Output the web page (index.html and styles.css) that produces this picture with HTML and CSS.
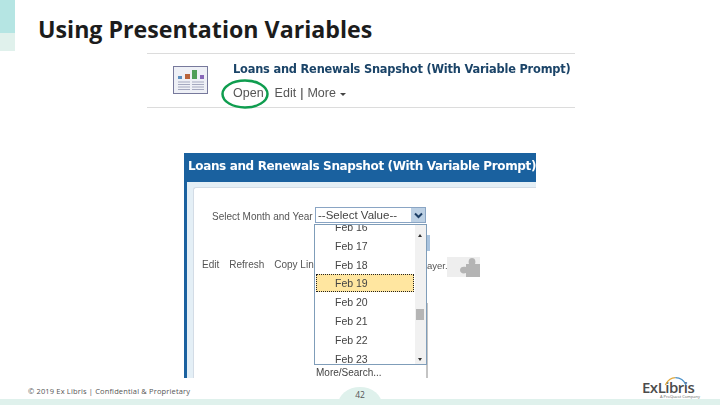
FILE: index.html
```html
<!DOCTYPE html>
<html>
<head>
    <meta charset="utf-8">
    <title>Using Presentation Variables</title>
    <link rel="stylesheet" href="styles.css">
</head>
<body>
    <div class="slide">
        <div class="accent"><div class="accent-top"></div><div class="accent-bottom"></div></div>
        <h1 class="title">Using Presentation Variables</h1>

        <!-- first screenshot: catalog entry -->
        <div class="shot catalog">
            <svg class="report-icon" width="36" height="29" viewBox="0 0 36 29">
                <rect x="0.5" y="0.5" width="34" height="27" fill="#eef0f6" stroke="#77799c"/>
                <rect x="5" y="10" width="4" height="3" fill="#5b8fc0"/>
                <rect x="12" y="8" width="5" height="5" fill="#b9643c"/>
                <rect x="19" y="4" width="5" height="9" fill="#4f9e58"/>
                <rect x="27" y="9" width="4" height="4" fill="#8867b8"/>
                <path d="M5 16h12M19 16h12M5 18.500h12M19 18.500h12M5 21h12M19 21h12M5 23.500h12M19 23.500h12" stroke="#a5a9c0"/>
            </svg>
            <div class="catalog-text">
                <div class="catalog-name">Loans and Renewals Snapshot (With Variable Prompt)</div>
                <div class="catalog-links">
                    <span>Open</span><span class="link-gap">Edit</span><b>|</b><span>More</span><i class="caret"></i>
                </div>
            </div>
            <svg class="ring" width="50" height="32" viewBox="0 0 50 32">
                <ellipse cx="25" cy="16" rx="22.500" ry="13.500" fill="none" stroke="#0f9d4f" stroke-width="2.500"/>
            </svg>
        </div>

        <!-- second screenshot: prompt with open dropdown -->
        <div class="shot prompt">
            <div class="prompt-head">Loans and Renewals Snapshot (With Variable Prompt)</div>
            <div class="prompt-body">
                <div class="prompt-inner">
                    <div class="prompt-row">
                        <span class="prompt-label">Select Month and Year</span>
                        <div class="select">
                            <span>--Select Value--</span>
                            <span class="select-btn">
                                <svg width="9" height="7" viewBox="0 0 9 7"><path d="M1 1.500l3.500 3.500 3.500-3.500" fill="none" stroke="#1d3f66" stroke-width="2"/></svg>
                            </span>
                        </div>
                    </div>
                    <div class="prompt-links">
                        <span>Edit</span><span>Refresh</span><span>Copy Link</span>
                    </div>
                </div>
            </div>

            <div class="side-btn"></div>
            <div class="side-line"></div>
            <span class="layer-text">ayer.</span>
            <div class="puzzle">
                <svg width="20" height="19" viewBox="0 0 20 19"><path d="M6 6h3c-1-3 0-6 3-6s4 3 3 6h5v13H6v-4c-3 1-6 0-6-3s3-4 6-3z" fill="#b4b4b4"/></svg>
            </div>

            <div class="dropdown">
                <div class="options">
                    <div class="option">Feb 16</div>
                    <div class="option">Feb 17</div>
                    <div class="option">Feb 18</div>
                    <div class="option selected">Feb 19</div>
                    <div class="option">Feb 20</div>
                    <div class="option">Feb 21</div>
                    <div class="option">Feb 22</div>
                    <div class="option">Feb 23</div>
                </div>
                <div class="scrollbar">
                    <i class="arrow-up"></i>
                    <div class="thumb"></div>
                    <i class="arrow-down"></i>
                </div>
            </div>
            <div class="more-search">More/Search...</div>
        </div>

        <div class="footer">
            <span class="copyright">© 2019 Ex Libris | Confidential &amp; Proprietary</span>
            <span class="page-tab">42</span>
            <div class="logo">
                <svg class="logo-arc" width="24" height="10" viewBox="0 0 36 14">
                    <path d="M2 13C6 5 11 2 17 2" fill="none" stroke="#e0a83c" stroke-width="2"/>
                    <path d="M17 2C24 2 30 6 33 13" fill="none" stroke="#4a90c8" stroke-width="2"/>
                </svg>
                <div class="logo-word">ExLibris</div>
                <div class="logo-sub">A ProQuest Company</div>
            </div>
        </div>
    </div>
</body>
</html>
```

FILE: styles.css
```css
html, body {
    margin: 0;
    padding: 0;
}
body {
    width: 720px;
    height: 405px;
    overflow: hidden;
    background: white;
}
.slide {
    position: relative;
    width: 720px;
    height: 405px;
    overflow: hidden;
    background: white;
}
.accent {
    position: absolute;
    left: 0;
    top: 0;
    width: 15px;
}
.accent-top {
    height: 33px;
    background: #b5e5e3;
}
.accent-bottom {
    height: 18px;
    background: #e0f1ec;
}
.title {
    position: absolute;
    left: 38px;
    top: 12px;
    margin: 0;
    font-family: "Open Sans", sans-serif;
    font-size: 23.200px;
    line-height: 34px;
    font-weight: 700;
    letter-spacing: 0;
    color: #1c1c1c;
    white-space: nowrap;
}

/* pasted screenshots */
.shot {
    position: absolute;
    font-family: "DejaVu Sans", sans-serif;
    filter: blur(0.4px);
}
.catalog {
    left: 147px;
    top: 53px;
    width: 428px;
    height: 55px;
    box-sizing: border-box;
    border-top: 1px solid #dcdcdc;
    border-bottom: 1px solid #dcdcdc;
    display: flex;
    gap: 24px;
    padding: 8px 0 0 26px;
}
.report-icon {
    margin-top: 4px;
}
.catalog-name {
    font-size: 11.400px;
    font-weight: bold;
    line-height: 14px;
    color: #1b4468;
    white-space: nowrap;
    letter-spacing: -0.2px;
}
.catalog-links {
    display: flex;
    align-items: center;
    margin-top: 10px;
    font-family: "Liberation Sans", sans-serif;
    font-size: 12.500px;
    line-height: 14px;
    color: #555;
}
.catalog-links .link-gap {
    margin-left: 11px;
}
.catalog-links b {
    margin: 0 4px;
    font-weight: normal;
    color: #333;
}
.caret {
    margin: 2px 0 0 4px;
    border-left: 3.500px solid transparent;
    border-right: 3.500px solid transparent;
    border-top: 3.500px solid #444;
}
.ring {
    position: absolute;
    left: 73px;
    top: 24px;
}
.prompt {
    left: 184px;
    top: 153px;
    width: 352px;
    height: 225px;
}
.prompt-head {
    height: 29px;
    padding-left: 4px;
    background: #1a619f;
    color: white;
    font-size: 12px;
    font-weight: bold;
    line-height: 26px;
    white-space: nowrap;
    letter-spacing: -0.36px;
}
.prompt-body {
    height: 196px;
    box-sizing: border-box;
    border-left: 3px solid #1a619f;
    background: #e4eff6;
    padding: 5px 0 0 6px;
}
.prompt-inner {
    height: 191px;
    box-sizing: border-box;
    background: white;
    border-top: 1px solid #d3dce6;
    border-left: 1px solid #d3dce6;
    border-top-left-radius: 3px;
    padding: 19px 0 0 18px;
    font-family: "Liberation Sans", sans-serif;
    font-size: 10px;
    color: #555;
}
.prompt-row {
    display: flex;
    align-items: center;
}
.prompt-label {
    width: 103px;
    white-space: nowrap;
    margin-top: 2px;
}
.select {
    width: 111px;
    height: 16px;
    box-sizing: border-box;
    border: 1px solid #8aa5c4;
    display: flex;
    align-items: center;
    justify-content: space-between;
    padding-left: 2px;
    font-size: 11.500px;
    color: #444;
    white-space: nowrap;
}
.select-btn {
    width: 14px;
    height: 14px;
    background: #bcd0e4;
    display: flex;
    align-items: center;
    justify-content: center;
}
.prompt-links {
    display: flex;
    margin-top: 36px;
    margin-left: -10px;
    gap: 10px;
}
.prompt-links span {
    white-space: nowrap;
}
.side-btn {
    position: absolute;
    left: 243px;
    top: 82px;
    width: 3px;
    height: 16px;
    background: #a9c3de;
}
.side-line {
    position: absolute;
    left: 242px;
    top: 150px;
    width: 2px;
    height: 75px;
    background: #c4c4c4;
}
.layer-text {
    position: absolute;
    left: 243px;
    top: 107px;
    font-family: "Liberation Sans", sans-serif;
    font-size: 9.500px;
    color: #555;
}
.puzzle {
    position: absolute;
    left: 263px;
    top: 104px;
    width: 33px;
    height: 20px;
    background: #eeeeee;
    display: flex;
    justify-content: flex-end;
    align-items: flex-end;
}
.dropdown {
    position: absolute;
    left: 130px;
    top: 71px;
    width: 113px;
    height: 141px;
    box-sizing: border-box;
    border: 1px solid #7f9db9;
    background: white;
    display: flex;
    overflow: hidden;
    font-family: "Liberation Sans", sans-serif;
    font-size: 10.500px;
    color: #444;
}
.options {
    flex: 1;
    margin-top: -7px;
    padding: 0 1px;
}
.option {
    height: 17.800px;
    margin-bottom: 1px;
    padding-left: 19px;
    line-height: 18px;
    white-space: nowrap;
}
.option.selected {
    background: #ffe6a0;
    outline: 1px dotted #222;
    outline-offset: -1px;
}
.scrollbar {
    position: relative;
    width: 11px;
    background: #f1f1f1;
}
.thumb {
    position: absolute;
    left: 1px;
    top: 84px;
    width: 8px;
    height: 11px;
    background: #b5b5b5;
}
.arrow-up, .arrow-down {
    position: absolute;
    left: 3px;
    border-left: 2.500px solid transparent;
    border-right: 2.500px solid transparent;
}
.arrow-up {
    top: 9px;
    border-bottom: 3px solid #333;
}
.arrow-down {
    bottom: 3px;
    border-top: 3px solid #333;
}
.more-search {
    position: absolute;
    left: 132px;
    top: 214px;
    font-family: "Liberation Sans", sans-serif;
    font-size: 10px;
    color: #444;
    white-space: nowrap;
}

/* footer */
.footer {
    position: absolute;
    left: 0;
    right: 0;
    bottom: 0;
    height: 6px;
    background: #dff1ec;
}
.copyright {
    position: absolute;
    left: 28px;
    top: -14px;
    font-family: "Open Sans", sans-serif;
    font-size: 7.500px;
    line-height: 12px;
    letter-spacing: 0.15px;
    color: #555;
    white-space: nowrap;
}
.page-tab {
    position: absolute;
    left: 338px;
    top: -12px;
    width: 44px;
    height: 18px;
    border-radius: 50% 50% 0 0 / 100% 100% 0 0;
    background: #dff1ec;
    text-align: center;
    font-family: "Open Sans", sans-serif;
    font-size: 8.500px;
    line-height: 16px;
    color: #555;
}
.logo {
    position: absolute;
    left: 642px;
    top: -18px;
    width: 56px;
}
.logo-arc {
    position: absolute;
    left: 22px;
    top: -5px;
}
.logo-word {
    font-family: "Open Sans", sans-serif;
    font-size: 15px;
    line-height: 12px;
    font-weight: 600;
    letter-spacing: -0.5px;
    color: #4c4c4c;
    white-space: nowrap;
}
.logo-sub {
    position: absolute;
    left: 18px;
    top: 13px;
    font-family: "Open Sans", sans-serif;
    font-size: 4px;
    line-height: 5px;
    color: #666;
    white-space: nowrap;
}
```
